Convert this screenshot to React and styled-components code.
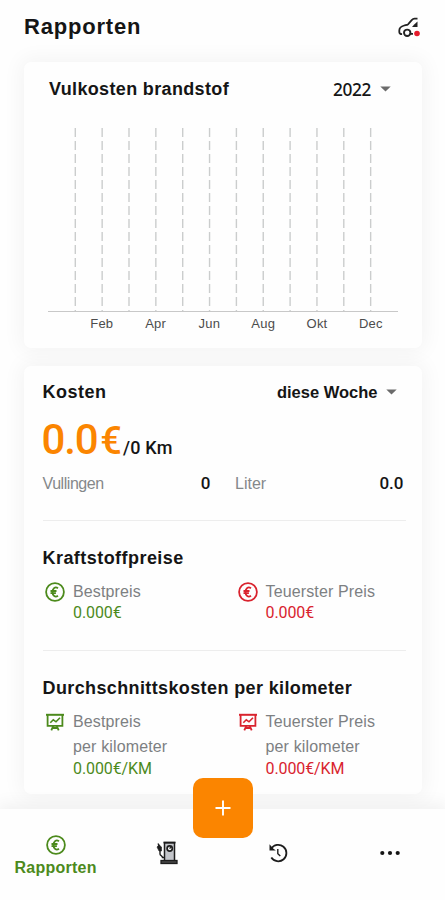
import styled, { createGlobalStyle } from "styled-components";

const GREEN = "#4c8a1c";
const RED = "#d9232e";
const ORANGE = "#fb8500";

const GlobalStyle = createGlobalStyle`
  * {
    box-sizing: border-box;
  }
  body {
    margin: 0;
    background-color: #fefefe;
    font-family: "Liberation Sans", Arial, sans-serif;
    color: #151515;
  }
  h1, h2, p {
    margin: 0;
  }
  svg {
    display: block;
    flex-shrink: 0;
  }
`;

const Screen = styled.div`
  width: 100%;
  height: 900px;
  display: flex;
  flex-direction: column;
  overflow: hidden;
`;

const Header = styled.header`
  height: 54px;
  padding: 0 25px 0 24px;
  display: flex;
  justify-content: space-between;
  align-items: center;
  h1 {
    font-size: 22px;
    font-weight: 700;
    letter-spacing: 0.8px;
  }
`;

const Content = styled.main`
  height: 755px;
  padding: 8px 23px 15px 24px;
  display: flex;
  flex-direction: column;
  gap: 18px;
`;

const Card = styled.section`
  height: ${({ $height }) => $height}px;
  border-radius: 7px;
  background-color: #fefefe;
  box-shadow: 0 0 20px 4px rgba(0, 0, 0, 0.045);
`;

const CostCard = styled(Card)`
  padding: 10px 16px 0 18.5px;
`;

const CardHead = styled.div`
  height: ${({ $height }) => $height}px;
  padding: ${({ $pad }) => $pad};
  display: flex;
  justify-content: space-between;
  align-items: center;
`;

const Heading = styled.h2`
  font-size: 18px;
  line-height: 32px;
  font-weight: 700;
  white-space: nowrap;
  letter-spacing: ${({ $track }) => $track || 0.38}px;
`;

const Select = styled.button`
  display: flex;
  align-items: center;
  gap: ${({ $gap }) => $gap}px;
  padding: 0;
  border: 0;
  background: none;
  color: #151515;
  font-family: ${({ $digits }) =>
    $digits ? `"Noto Sans", sans-serif` : `"Liberation Sans", sans-serif`};
  font-size: ${({ $digits }) => ($digits ? 17.3 : 16.5)}px;
  font-weight: ${({ $digits }) => ($digits ? 500 : 700)};
  letter-spacing: ${({ $digits }) => ($digits ? -0.4 : 0)}px;
`;

const Amount = styled.div`
  height: 64px;
  line-height: 64px;
  display: flex;
  align-items: baseline;
  font-family: Roboto, sans-serif;
  font-weight: 500;
`;

const Big = styled.span`
  font-size: 42px;
  letter-spacing: -1.2px;
  color: ${ORANGE};
  margin-left: -1px;
`;

const Euro = styled.span`
  font-size: 38px;
  color: ${ORANGE};
  margin-left: 3px;
`;

const PerKm = styled.span`
  font-size: 18px;
  margin-left: 1px;
  letter-spacing: 0.2px;
`;

const Stats = styled.div`
  display: grid;
  grid-template-columns: 168px 168.5px;
  column-gap: 24.5px;
  line-height: 23px;
`;

const Stat = styled.div`
  display: flex;
  justify-content: space-between;
  font-size: 16px;
  letter-spacing: ${({ $track }) => $track || 0}px;
  color: #85888a;
  strong {
    font-family: Roboto, sans-serif;
    font-size: 17px;
    font-weight: 500;
    letter-spacing: 0;
    color: #151515;
  }
`;

const Divider = styled.div`
  height: 1px;
  margin-top: ${({ $top }) => $top}px;
  margin-bottom: 21px;
  background-color: #ededed;
`;

const Prices = styled.div`
  display: grid;
  grid-template-columns: 192.5px 1fr;
  margin-top: 6px;
`;

const Price = styled.div`
  display: flex;
  gap: 8px;
  padding-left: 2.5px;
  color: #7d8082;
  font-size: 16px;
  white-space: nowrap;
  svg {
    margin-top: 2px;
  }
`;

const PriceLine = styled.p`
  line-height: ${({ $height }) => $height}px;
  letter-spacing: 0.14px;
`;

const PriceValue = styled.p`
  line-height: 18px;
  font-family: Roboto, sans-serif;
  color: ${({ $color }) => $color};
  letter-spacing: -0.1px;
`;

const Nav = styled.nav`
  position: relative;
  height: 91px;
  display: grid;
  grid-template-columns: repeat(4, 111.3px);
  background-color: #fefefe;
  box-shadow: 0 -3px 16px 2px rgba(0, 0, 0, 0.055);
`;

const NavItem = styled.div`
  height: 88px;
  padding-top: ${({ $active }) => ($active ? 7 : 0)}px;
  display: flex;
  flex-direction: column;
  align-items: center;
  justify-content: center;
  gap: 3px;
  color: ${({ $active }) => ($active ? GREEN : "#151515")};
  font-size: 16px;
  font-weight: 700;
  letter-spacing: 0.25px;
  line-height: 20px;
`;

const AddButton = styled.button`
  position: absolute;
  top: -31px;
  left: 193px;
  width: 60px;
  height: 60px;
  padding: 0;
  border: 0;
  border-radius: 10px;
  background-color: ${ORANGE};
  display: flex;
  justify-content: center;
  align-items: center;
`;

const Caret = () => (
  <svg width="11" height="6" viewBox="0 0 11 6">
    <path d="M0.3 0.4h10.4L5.5 5.6z" fill="#6b6b6b" />
  </svg>
);

const CarIcon = () => (
  <svg width="23" height="21" viewBox="0 0 23 21" fill="none">
    <path
      d="M20.5 1.7h-3c-1.300 0-2 .6-2.800 1.500L11 7.300c-.8.800-2.200.8-3.800 1.200-3.200.9-4.900 2.200-4.900 4.900v1.600c0 1.500.8 2.200 2.800 2.200M12.800 16.800h3.200"
      stroke="#222"
      strokeWidth="1.8"
    />
    <circle cx="10.2" cy="15.800" r="3.200" stroke="#222" strokeWidth="1.900" />
    <path d="M20.5 4.500v5.500h-5.500l2.200-2.400z" fill="#222" />
    <circle cx="20" cy="16.500" r="2.800" fill="#e51b2b" />
  </svg>
);

const EuroIcon = ({ color }) => (
  <svg width="20" height="20" viewBox="0 0 20 20" fill="none" stroke={color}>
    <circle cx="10" cy="10" r="8.9" strokeWidth="1.8" />
    <path
      d="M13 6.200c-2.800-1.900-5.500-.2-5.500 3.800s2.700 5.700 5.500 3.800M5.500 9h6M5.500 11.200h5.400"
      strokeWidth="1.8"
    />
  </svg>
);

const BoardIcon = ({ color }) => (
  <svg width="20" height="20" viewBox="0 0 20 20" fill="none" stroke={color}>
    <path d="M1 2.8h18" strokeWidth="2" />
    <path d="M2.600 3v10.800h14.800V3" strokeWidth="1.8" />
    <path d="M5.300 10.800l3-3 2.700 2 4-4" strokeWidth="1.6" />
    <path d="M8.300 14l-2 4.300M11.700 14l2 4.300M7.200 16h5.600" strokeWidth="1.800" />
  </svg>
);

const PumpIcon = () => (
  <svg width="22" height="24" viewBox="0 0 22 24" fill="none" stroke="#1d1d1d">
    <path d="M8.500 20V1.800h10V20" fill="#c3c5ca" strokeWidth="1.5" />
    <path d="M7.500 1.500h12" strokeWidth="1.800" />
    <circle cx="13.700" cy="7.500" r="2.600" fill="#fff" strokeWidth="1.700" />
    <path d="M13.500 7.500l1.500-1.300" strokeWidth="1.300" />
    <rect x="5" y="19.500" width="16" height="3" fill="#444" strokeWidth="1.300" />
    <path d="M2 2.500l1.500 3M4 9v4c0 1.800 2.500 1.300 2.500 3.500h2" strokeWidth="1.400" />
    <path d="M1 6l2-2.200 2.500 2.200v4H3z" fill="#1d1d1d" strokeWidth="0.600" />
  </svg>
);

const HistoryIcon = () => (
  <svg width="20" height="20" viewBox="0 0 20 20" fill="none" stroke="#1d1d1d">
    <path d="M3.200 5.800A8.200 8.200 0 1 1 3.300 14.500" strokeWidth="1.800" />
    <path d="M1.500 1.200v6.300h6.300L5.200 5.600z" fill="#1d1d1d" stroke="none" />
    <path d="M9.800 6v4.700l2.500 2.300" strokeWidth="1.400" />
  </svg>
);

const DotsIcon = () => (
  <svg width="20" height="6" viewBox="0 0 20 6" fill="#151515">
    <circle cx="2.300" cy="3" r="2.100" />
    <circle cx="10" cy="3" r="2.100" />
    <circle cx="17.700" cy="3" r="2.100" />
  </svg>
);

const PlusIcon = () => (
  <svg width="16" height="16" viewBox="0 0 16 16" stroke="#fff">
    <path d="M8 0.5v15M0.5 8h15" strokeWidth="1.9" />
  </svg>
);

const months = ["Feb", "Apr", "Jun", "Aug", "Okt", "Dec"];

const Chart = () => (
  <svg width="398" height="239" viewBox="0 0 398 239">
    {Array.from({ length: 12 }, (_, i) => (
      <path
        key={i}
        d={`M${51.3 + i * 26.85} 19v184`}
        stroke="#cbcdcd"
        strokeWidth="1.4"
        strokeDasharray="9 4"
      />
    ))}
    <path d="M24 202.5h350" stroke="#c8c8c8" strokeWidth="1.2" />
    {months.map((month, i) => (
      <text
        key={month}
        x={77.8 + i * 53.8}
        y="218.5"
        textAnchor="middle"
        fontSize="13"
        letterSpacing="0.2"
        fill="#4c4c4c"
      >
        {month}
      </text>
    ))}
  </svg>
);

const PriceItem = ({ icon, title, sub, value, color }) => (
  <Price>
    {icon}
    <div>
      <PriceLine $height={24}>{title}</PriceLine>
      {sub && <PriceLine $height={26}>{sub}</PriceLine>}
      <PriceValue $color={color}>{value}</PriceValue>
    </div>
  </Price>
);

export default function App() {
  return (
    <>
      <GlobalStyle />
      <Screen>
        <Header>
          <h1>Rapporten</h1>
          <CarIcon />
        </Header>

        <Content>
          <Card $height={286}>
            <CardHead $height={47} $pad="7px 31.5px 0 25px">
              <Heading $track={0.35}>Vulkosten brandstof</Heading>
              <Select $digits $gap={8.5}>
                2022
                <Caret />
              </Select>
            </CardHead>
            <Chart />
          </Card>

          <CostCard $height={428}>
            <CardHead $height={32} $pad="0 9.5px 0 0">
              <Heading $track={0.5}>Kosten</Heading>
              <Select $gap={8}>
                diese Woche
                <Caret />
              </Select>
            </CardHead>

            <Amount>
              <Big>0.0</Big>
              <Euro>€</Euro>
              <PerKm>/0 Km</PerKm>
            </Amount>

            <Stats>
              <Stat $track={-0.45}>
                Vullingen <strong>0</strong>
              </Stat>
              <Stat>
                Liter <strong>0.0</strong>
              </Stat>
            </Stats>

            <Divider $top={25} />

            <Heading $track={0.45}>Kraftstoffpreise</Heading>
            <Prices>
              <PriceItem
                icon={<EuroIcon color={GREEN} />}
                title="Bestpreis"
                value="0.000€"
                color={GREEN}
              />
              <PriceItem
                icon={<EuroIcon color={RED} />}
                title="Teuerster Preis"
                value="0.000€"
                color={RED}
              />
            </Prices>

            <Divider $top={28} />

            <Heading>Durchschnittskosten per kilometer</Heading>
            <Prices>
              <PriceItem
                icon={<BoardIcon color={GREEN} />}
                title="Bestpreis"
                sub="per kilometer"
                value="0.000€/KM"
                color={GREEN}
              />
              <PriceItem
                icon={<BoardIcon color={RED} />}
                title="Teuerster Preis"
                sub="per kilometer"
                value="0.000€/KM"
                color={RED}
              />
            </Prices>
          </CostCard>
        </Content>

        <Nav>
          <NavItem $active>
            <EuroIcon color={GREEN} />
            Rapporten
          </NavItem>
          <NavItem>
            <PumpIcon />
          </NavItem>
          <NavItem>
            <HistoryIcon />
          </NavItem>
          <NavItem>
            <DotsIcon />
          </NavItem>
          <AddButton>
            <PlusIcon />
          </AddButton>
        </Nav>
      </Screen>
    </>
  );
}
